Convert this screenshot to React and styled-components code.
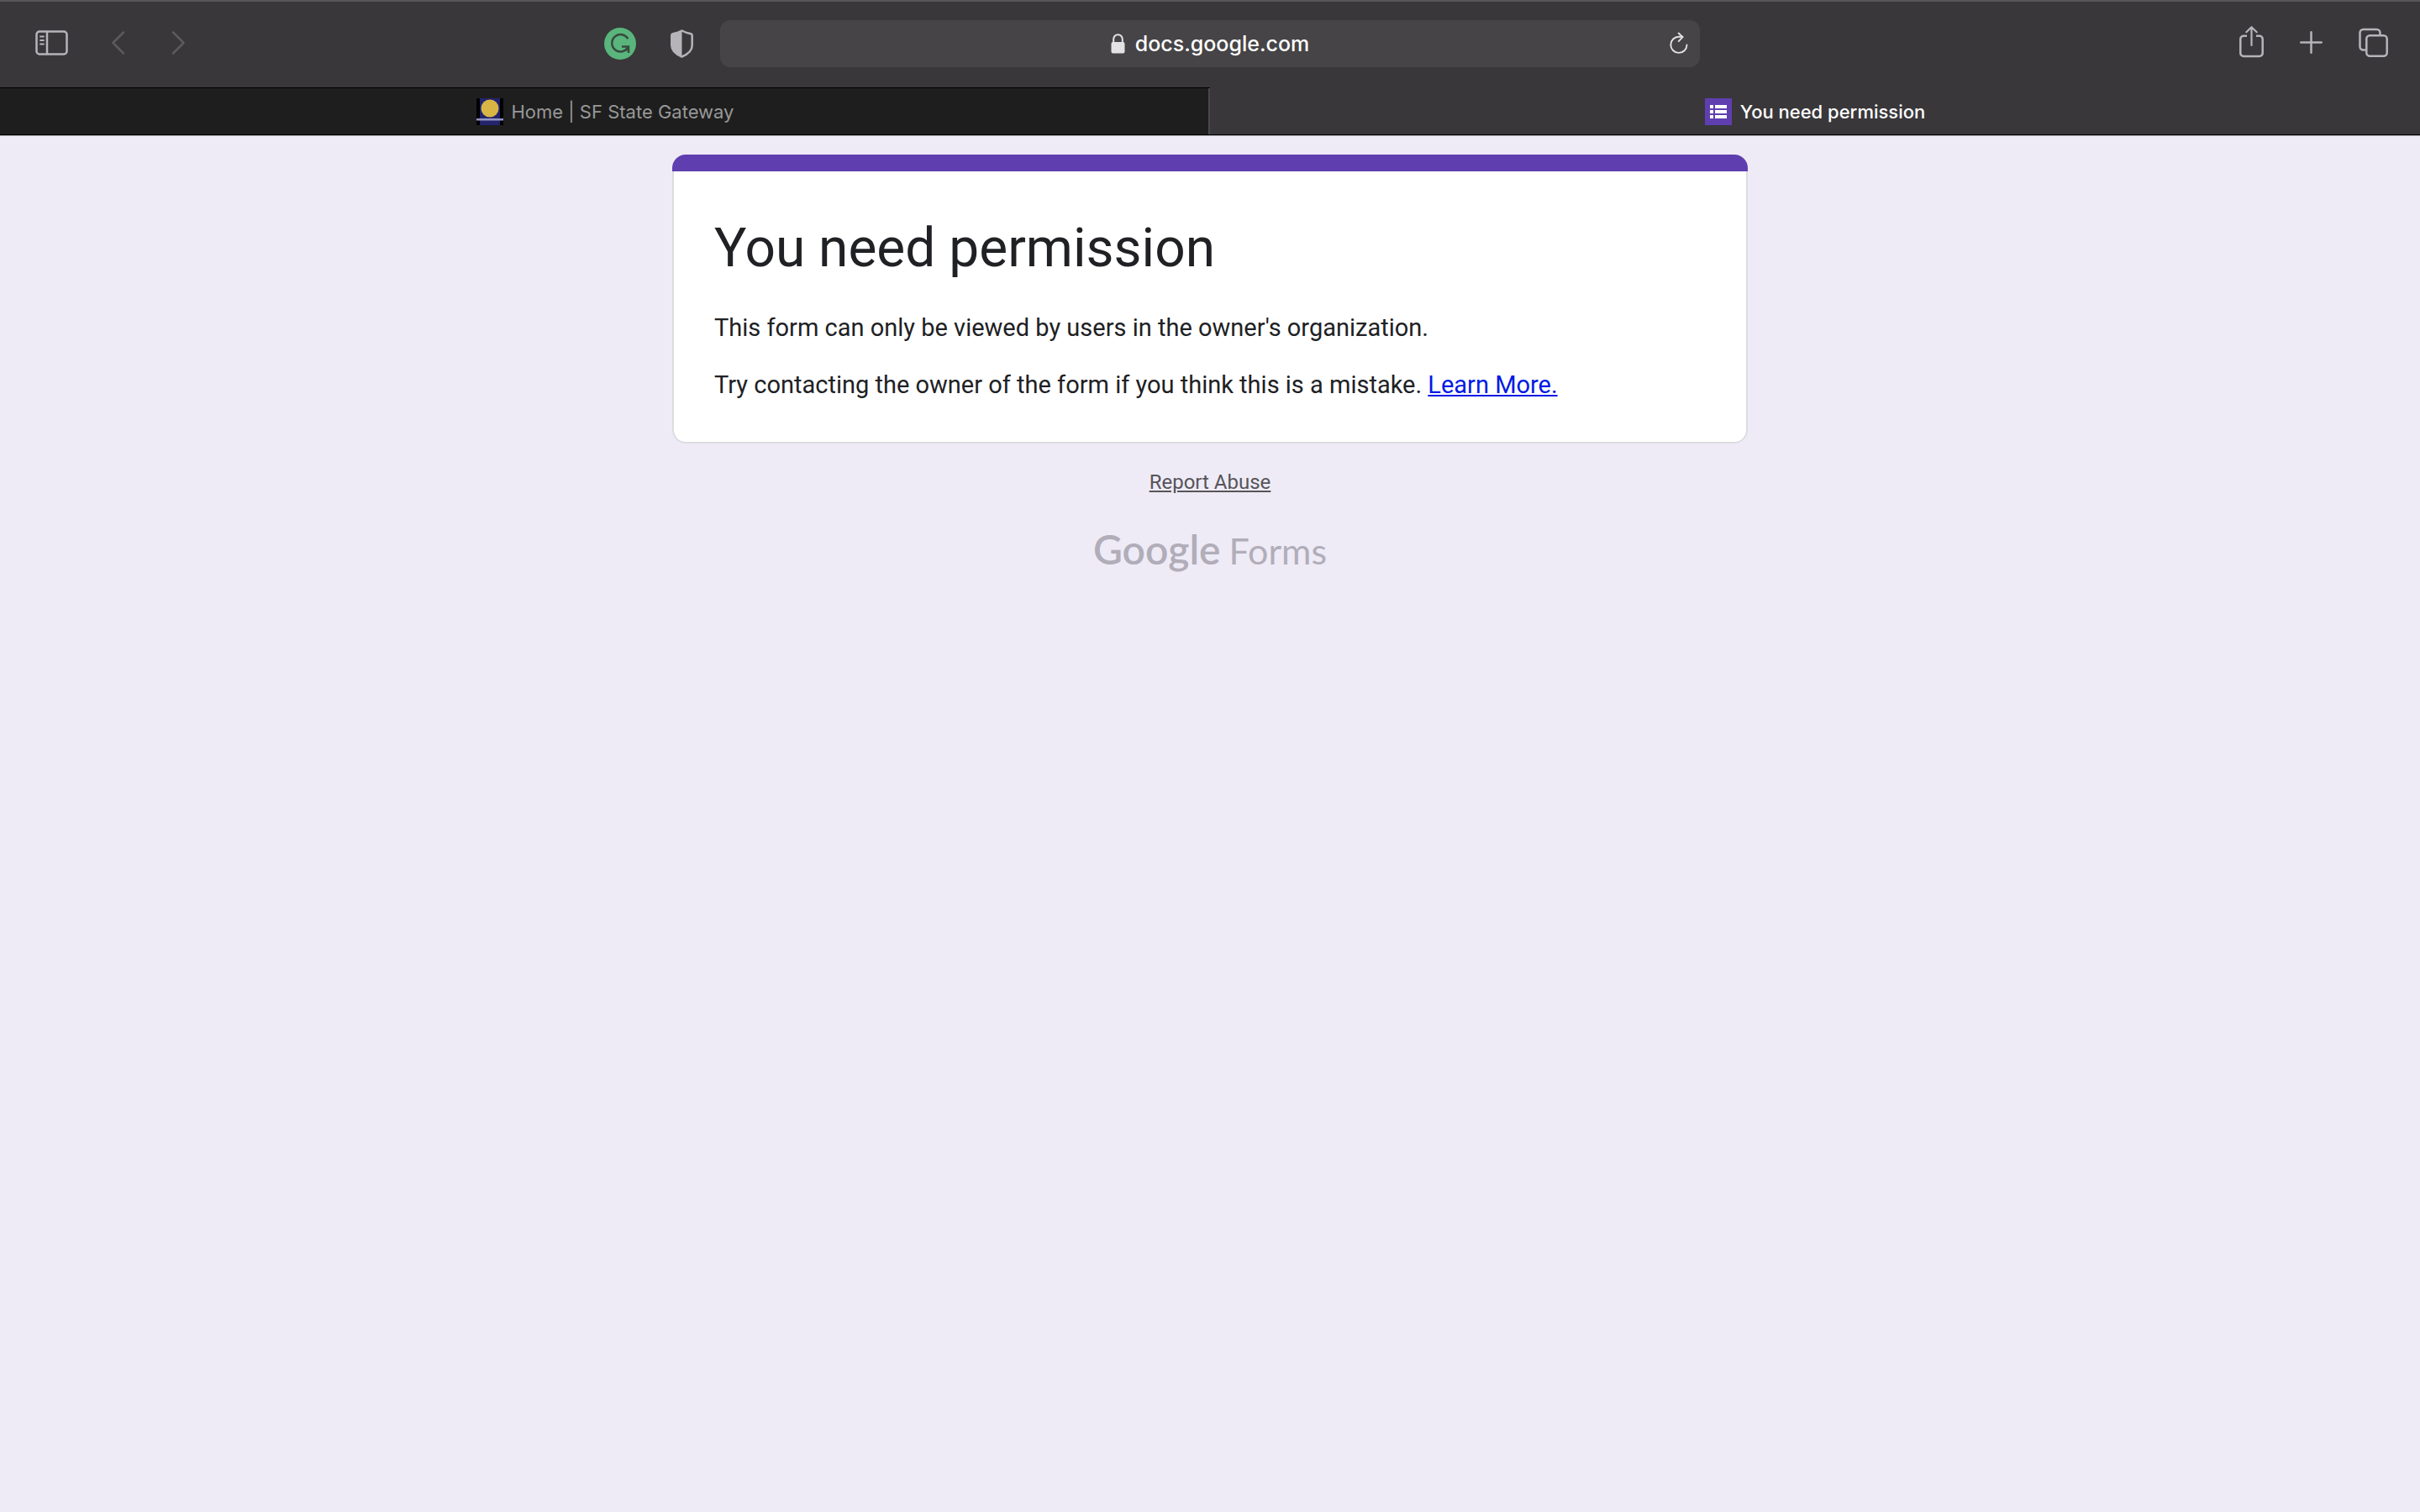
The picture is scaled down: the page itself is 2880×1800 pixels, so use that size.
import React from "react";
import styled, { createGlobalStyle } from "styled-components";

const ui = `Inter, "Liberation Sans", sans-serif`;
const body = `Roboto, "Liberation Sans", sans-serif`;

const GlobalStyle = createGlobalStyle`
  * { box-sizing: border-box; }
  body { margin: 0; background: #eeebf6; font-family: ${body}; }
`;

const Toolbar = styled.header`
  display: grid;
  grid-template-columns: 1fr minmax(0, 1166px) 1fr;
  align-items: center;
  gap: 22px;
  height: 104px;
  padding: 0 32px;
  background: #39373a;
  box-shadow: inset 0 2px #575658;
`;

const ToolGroup = styled.div`
  display: flex;
  align-items: center;
  gap: 24px;
  justify-content: ${(p) => p.$align || "flex-start"};
`;

const Side = styled.div`
  display: flex;
  justify-content: space-between;
  padding-left: 6px;
`;

const IconButton = styled.button`
  display: flex;
  flex: none;
  padding: 0;
  border: 0;
  background: none;
  color: ${(p) => (p.disabled ? "#5c5a5d" : "#b7b4b9")};
`;

const Glyph = styled.svg.attrs({ "aria-hidden": true })`
  display: block;
  width: ${(p) => p.$w || 48}px;
  height: ${(p) => p.$h || 48}px;
  fill: none;
  stroke: currentColor;
  stroke-width: 2.5;
  stroke-linecap: round;
  stroke-linejoin: round;
`;

const AddressBar = styled.div`
  display: grid;
  grid-template-columns: 1fr auto 1fr;
  align-items: center;
  height: 56px;
  padding: 0 12px;
  border-radius: 12px;
  background: #464446;
`;

const Address = styled.label`
  grid-column: 2;
  display: flex;
  align-items: center;
  gap: 12px;
  color: #e3e3e3;
`;

const AddressInput = styled.input`
  field-sizing: content;
  padding: 0;
  border: 0;
  outline: 0;
  background: none;
  color: #fff;
  font: 500 25px/32px ${ui};
`;

const Reload = styled(IconButton)`
  grid-column: 3;
  justify-self: end;
  color: #e3e3e3;
`;

const TabBar = styled.nav`
  display: grid;
  grid-template-columns: 1fr 1fr;
  height: 58px;
  background: #39373a;
  border-bottom: 1px solid #a9a7ab;
`;

const Tab = styled.button`
  display: flex;
  align-items: center;
  justify-content: center;
  gap: 10px;
  padding: 0;
  border: 0;
  border-bottom: 1px solid #000;
  border-top: 1px solid ${(p) => (p.$active ? "#39373a" : "#000")};
  background: ${(p) => (p.$active ? "#39373a" : "#1e1e1e")};
  box-shadow: ${(p) => (p.$active ? "none" : "inset -2px 0 #4a484b")};
  color: ${(p) => (p.$active ? "#fff" : "#989898")};
  font: ${(p) => (p.$active ? 500 : 400)} 22px/28px ${ui};
`;

const Page = styled.main`
  display: flex;
  flex-direction: column;
  align-items: center;
  padding: 22px 24px;
`;

const Card = styled.div`
  width: 100%;
  max-width: 1280px;
  overflow: hidden;
  border-radius: 16px;
`;

const CardStripe = styled.div`
  height: 20px;
  background: #5f3fb0;
`;

const CardBody = styled.section`
  padding: 52px 48px 48px;
  border: 2px solid #dadce0;
  border-top: 0;
  border-radius: 0 0 16px 16px;
  background: #fff;
  color: #202124;
`;

const Title = styled.h1`
  margin: 0 0 34px;
  font: 400 64px/80px ${body};
`;

const Text = styled.p`
  margin: 0;
  font: 400 29px/40px ${body};

  & + & {
    margin-top: 28px;
  }
`;

const LearnMore = styled.a`
  color: #0019e5;
`;

const ReportLink = styled.a`
  margin-top: 28px;
  color: #575459;
  font: 400 24px/36px ${body};
`;

const Brand = styled.a`
  display: flex;
  align-items: baseline;
  gap: 10px;
  margin-top: 32px;
  color: #b1adb9;
  text-decoration: none;
  font: 400 43px/60px Lato, "Liberation Sans", sans-serif;
`;

const BrandName = styled.span`
  font-size: 48px;
  font-weight: 600;
`;

export default function App() {
  return (
    <>
      <GlobalStyle />
      <Toolbar>
        <Side>
          <ToolGroup>
            <IconButton aria-label="Show sidebar">
              <Glyph viewBox="0 0 48 48">
                <rect x="5.5" y="9.5" width="36" height="27" rx="3.5" />
                <path d="M18 10v26" />
                <path d="M10 15.5h4M10 20h4M10 24.5h4" strokeWidth="1.8" />
              </Glyph>
            </IconButton>
            <IconButton aria-label="Back" disabled>
              <Glyph viewBox="0 0 48 48">
                <path d="M37 10.5 24.5 23 37 35.5" />
              </Glyph>
            </IconButton>
            <IconButton aria-label="Forward" disabled>
              <Glyph viewBox="0 0 48 48">
                <path d="M24 10.5 36.5 23 24 35.5" />
              </Glyph>
            </IconButton>
          </ToolGroup>
          <ToolGroup>
            <IconButton aria-label="Grammarly">
              <Glyph viewBox="0 0 48 48">
                <circle cx="23" cy="24" r="19" fill="#59b57c" stroke="none" />
                <g stroke="#39493f" strokeLinecap="butt" strokeLinejoin="miter">
                  <path d="M32.3 18.2A10.2 10.2 0 1 0 31.7 29.3" />
                  <path d="M25 27.5h8v7.5M33 28l-4 4.5" />
                </g>
              </Glyph>
            </IconButton>
            <IconButton aria-label="Privacy report">
              <Glyph viewBox="0 0 48 48">
                <path d="M24.5 8.5C28 10.5 32 11.5 35.2 12.2Q36.7 12.6 36.7 14v12c0 6-5 10.5-12.2 13.5C17.3 36.5 12.3 32 12.3 26V14q0-1.4 1.5-1.8C17 11.5 21 10.5 24.5 8.5Z" />
                <path d="M24.5 8.5v31C17.3 36.5 12.3 32 12.3 26V14q0-1.4 1.5-1.8C17 11.5 21 10.5 24.5 8.5Z" fill="currentColor" stroke="none" />
              </Glyph>
            </IconButton>
          </ToolGroup>
        </Side>
        <AddressBar>
          <Address>
            <Glyph viewBox="0 0 17 24" $w={17} $h={24}>
              <rect x="0.5" y="10" width="16" height="13.5" rx="2" fill="currentColor" stroke="none" />
              <path d="M3.2 11V6.5a5.3 5.3 0 0 1 10.6 0V11" strokeWidth="2" />
            </Glyph>
            <AddressInput aria-label="Address" defaultValue="docs.google.com" />
          </Address>
          <Reload aria-label="Reload page">
            <Glyph viewBox="0 0 26 28" $w={26} $h={28}>
              <path d="M22.5 15.5A9.6 9.6 0 1 1 12.9 5.7H17.5" strokeWidth="1.9" />
              <path d="m12.7 1.5 4.8 4.6-4.8 5" strokeWidth="1.9" />
            </Glyph>
          </Reload>
        </AddressBar>
        <ToolGroup $align="flex-end">
          <IconButton aria-label="Share">
            <Glyph viewBox="0 0 48 48">
              <path d="M18 14.8h-4a3.7 3.7 0 0 0-3.7 3.7v16.7a3.7 3.7 0 0 0 3.7 3.7h19a3.7 3.7 0 0 0 3.7-3.7V18.5a3.7 3.7 0 0 0-3.7-3.7h-4" strokeLinecap="butt" />
              <path d="M23.5 26V4.5M17.3 10.2l6.2-6 6.2 6" strokeWidth="2.2" />
            </Glyph>
          </IconButton>
          <IconButton aria-label="New tab">
            <Glyph viewBox="0 0 48 48">
              <path d="M22.5 10.3v24.4M10.3 22.5h24.4" />
            </Glyph>
          </IconButton>
          <IconButton aria-label="Tab overview">
            <Glyph viewBox="0 0 48 48">
              <rect x="16.3" y="14.3" width="24.4" height="24.4" rx="4" />
              <path d="M15.5 31.5h-3a4 4 0 0 1-4-4V11a4 4 0 0 1 4-4h16a4 4 0 0 1 4 4v3" strokeLinecap="butt" />
            </Glyph>
          </IconButton>
        </ToolGroup>
      </Toolbar>
      <TabBar aria-label="Tabs">
        <Tab>
          <Glyph viewBox="0 0 32 32" $w={32} $h={32}>
            <path d="M0 0h32v32H0z" fill="#000" stroke="none" />
            <path d="M4 0h24v32H4z" fill="#23246c" stroke="none" />
            <path d="M0 24h32v2.5H0z" fill="#9296c4" stroke="none" />
            <circle cx="16" cy="12" r="10.5" fill="#d8b545" stroke="none" />
          </Glyph>
          Home | SF State Gateway
        </Tab>
        <Tab $active aria-current="page">
          <Glyph viewBox="0 0 32 32" $w={32} $h={32}>
            <path d="M0 0h32v32H0z" fill="#5f3fb0" stroke="none" />
            <path d="M6 8h4v4H6zM12 8h14v4H12zM6 14h4v4H6zM12 14h14v4H12zM6 20h4v4H6zM12 20h14v4H12z" fill="#fff" stroke="none" />
          </Glyph>
          You need permission
        </Tab>
      </TabBar>
      <Page>
        <Card>
          <CardStripe />
          <CardBody>
            <Title>You need permission</Title>
            <Text>This form can only be viewed by users in the owner's organization.</Text>
            <Text>
              Try contacting the owner of the form if you think this is a mistake.{" "}
              <LearnMore href="#learn-more">Learn More.</LearnMore>
            </Text>
          </CardBody>
        </Card>
        <ReportLink href="#report-abuse">Report Abuse</ReportLink>
        <Brand href="#forms">
          <BrandName>Google</BrandName>
          <span>Forms</span>
        </Brand>
      </Page>
    </>
  );
}
